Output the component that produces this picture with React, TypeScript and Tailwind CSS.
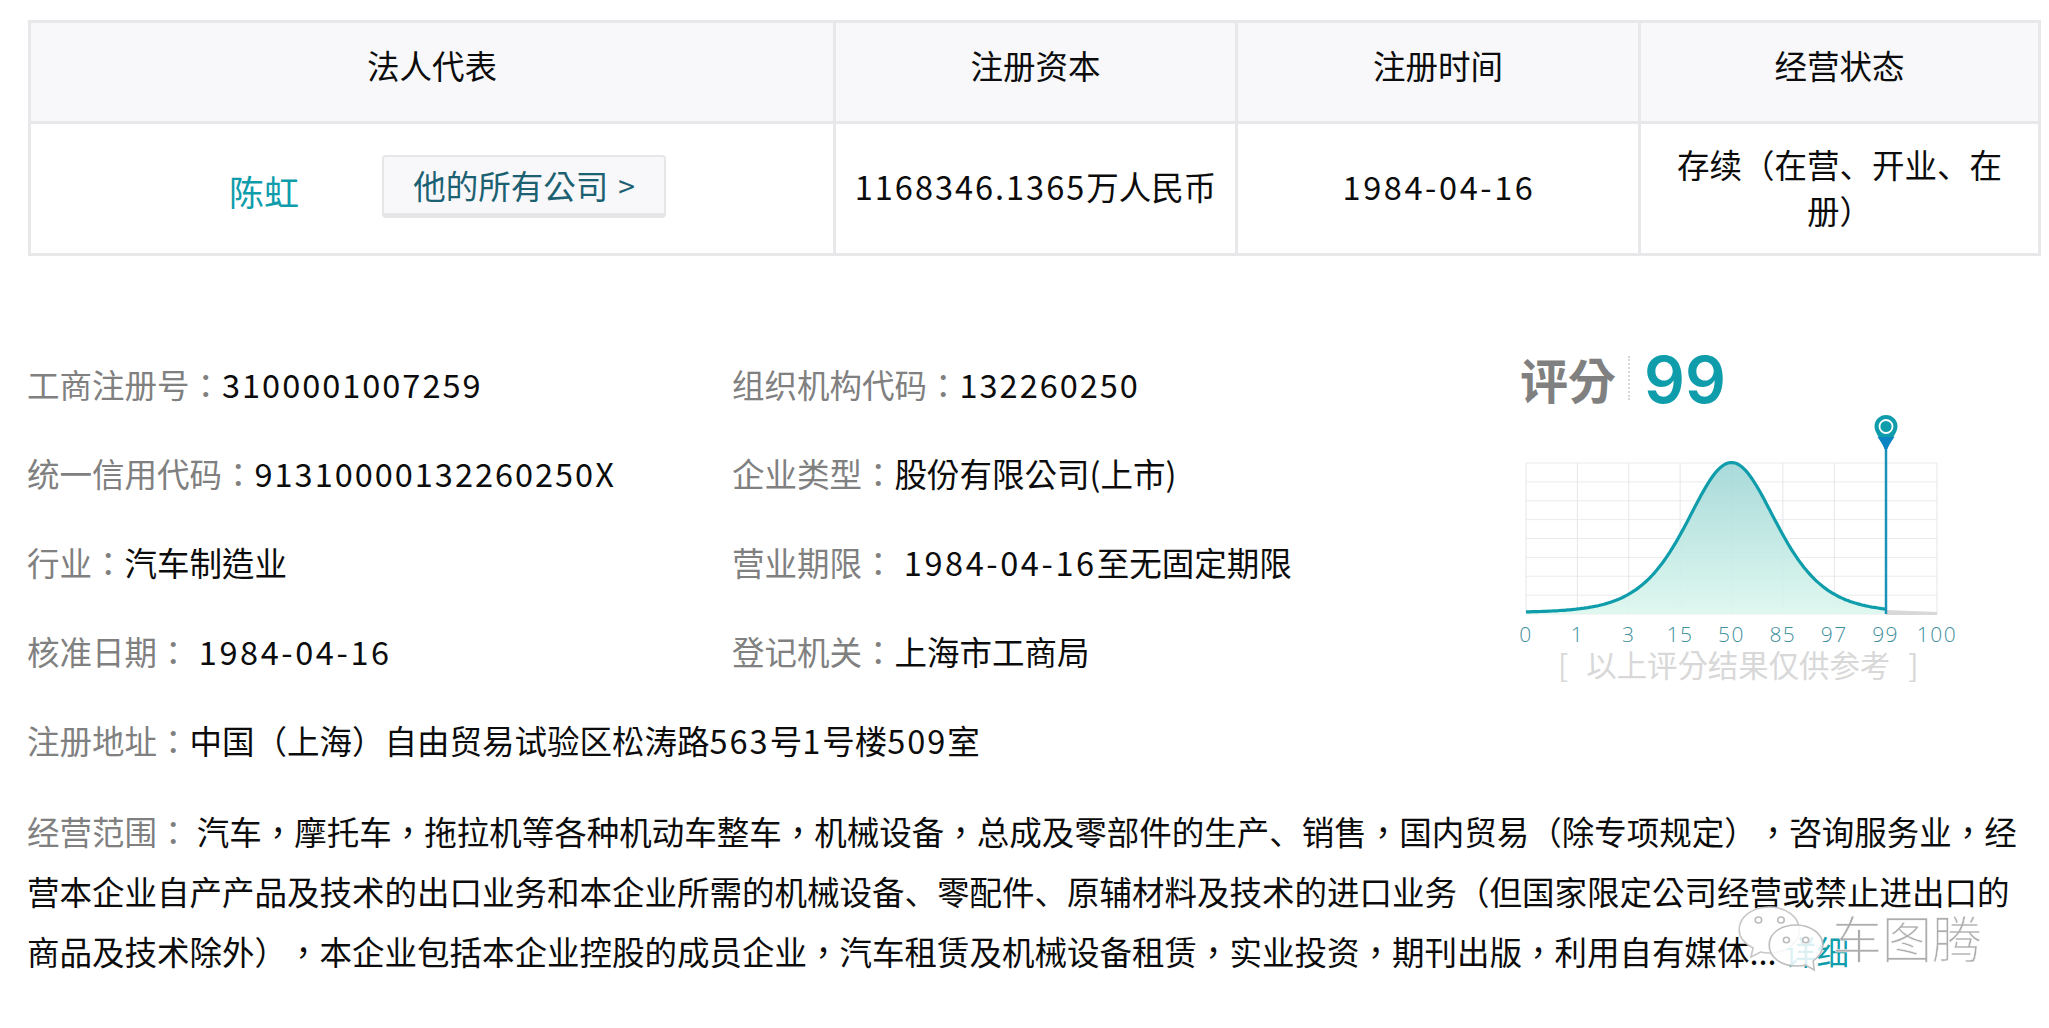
import React from "react";

const teal = "#0f9dab";
const ticks = ["0", "1", "3", "15", "50", "85", "97", "99", "100"];

// chart origin sits at x 10, y 53 of the svg
const CHART_W = 411;
const CHART_H = 151;
const X0 = 10;
const Y0 = 53;

// the bell has heavier tails than a gaussian, sech^2 fits it well
function curveY(x: number) {
  const c = Math.cosh((x - 205.500) / 60);
  return 202.500 - 150 / (c * c);
}

function curvePoints() {
  const pts: string[] = [];
  for (let x = 0; x <= 360; x += 2) {
    pts.push(`${X0 + x},${curveY(x).toFixed(1)}`);
  }
  return pts.join(" ");
}

function Num({ children }: { children: React.ReactNode }) {
  return <span className="tracking-[2px]">{children}</span>;
}

function DateText({ children }: { children: React.ReactNode }) {
  return <span className="ml-[2px] tracking-[2.6px]">{children}</span>;
}

// the enumeration comma sits low-left in the picture, so it keeps the SC form
function Dun() {
  return <span className="font-['Noto_Sans_CJK_SC',sans-serif]">、</span>;
}

function Field({ label, children }: { label: string; children: React.ReactNode }) {
  return (
    <div className="flex h-[89px] items-center whitespace-pre">
      <span className="text-[#808080]">{label}</span>
      <span>{children}</span>
    </div>
  );
}

function ScoreChart() {
  const line = curvePoints();
  return (
    <svg width="460" height="246" viewBox="0 0 460 246" className="-ml-[4px] mt-[5px] block">
      <defs>
        <linearGradient id="area" x1="0" y1="0" x2="0" y2="1">
          <stop offset="0" stopColor="#9fd6d6" />
          <stop offset="1" stopColor="#dcf7ee" />
        </linearGradient>
      </defs>
      {Array.from({ length: 9 }).map((_, i) => (
        <line key={i} x1={X0} x2={X0 + CHART_W} y1={Y0 + (i * CHART_H) / 8} y2={Y0 + (i * CHART_H) / 8} stroke="#ebebee" />
      ))}
      {Array.from({ length: 9 }).map((_, i) => (
        <line key={i} y1={Y0} y2={Y0 + CHART_H} x1={X0 + (i * CHART_W) / 8} x2={X0 + (i * CHART_W) / 8} stroke="#e6e6ea" />
      ))}
      <polygon points={`${X0},${Y0 + CHART_H} ${line} ${X0 + 360},${Y0 + CHART_H}`} fill="url(#area)" opacity="0.9" />
      <polygon points={`${X0 + 360},${Y0 + CHART_H - 4} ${X0 + CHART_W},${Y0 + CHART_H - 2} ${X0 + CHART_W},${Y0 + CHART_H + 1} ${X0 + 360},${Y0 + CHART_H + 1}`} fill="#d8d8d8" />
      <polyline points={line} fill="none" stroke={teal} strokeWidth="3.200" />
      <line x1={X0 + 360} x2={X0 + 360} y1="40" y2={Y0 + CHART_H} stroke="#1a93b8" strokeWidth="2.500" />
      <path d="M370 5a11.5 11.5 0 0 1 11.5 11.5c0 7-7 12-11.5 26c-4.500-14-11.500-19-11.500-26A11.500 11.500 0 0 1 370 5z" fill={teal} />
      <path d="M361.500 27c2.800 4 6 8 8.500 15.500c2.500-7.500 5.700-11.500 8.500-15.500z" fill="#0b84c4" />
      <circle cx="370" cy="16.500" r="6.500" fill={teal} stroke="#fff" strokeWidth="1.800" />
      {ticks.map((t, i) => (
        <text
          key={t}
          x={X0 + (i * CHART_W) / 8}
          y="232"
          textAnchor="middle"
          fontSize="21"
          letterSpacing="1.500"
          fill="#3f8f9c"
          fontFamily="'Open Sans', sans-serif"
          fontWeight="300"
        >
          {t}
        </text>
      ))}
    </svg>
  );
}

function Watermark() {
  return (
    <div className="absolute left-[1737px] top-[904px] flex items-center gap-[7px]">
      <svg width="88" height="70" viewBox="0 0 82 70" preserveAspectRatio="none">
        <path d="M30 3c16 0 28 10 28 23c0 13-12 23-28 23c-3 0-6-.4-8-1l-9 5l2-9C8 40 2 34 2 26C2 13 14 3 30 3z" fill="#fff" fillOpacity="0.85" stroke="#c8c8c8" strokeWidth="1.500" />
        <circle cx="20" cy="16" r="3" fill="#fff" stroke="#bbb" strokeWidth="1.500" />
        <circle cx="41" cy="16" r="3" fill="#fff" stroke="#bbb" strokeWidth="1.500" />
        <path d="M55 21c14 0 25 9 25 20c0 7-4 12-9 16l1 9l-8-5c-3 1-6 1-9 1c-14 0-25-9-25-21s11-20 25-20z" fill="#fff" fillOpacity="0.85" stroke="#bdbdbd" strokeWidth="1.500" />
        <circle cx="46" cy="36" r="2.800" fill="#fff" stroke="#bbb" strokeWidth="1.500" />
        <circle cx="64" cy="36" r="2.800" fill="#fff" stroke="#bbb" strokeWidth="1.500" />
      </svg>
      <span className="-mt-[6px] text-[50px] font-light leading-none text-[#adadad] [-webkit-text-stroke:0.5px_#fff]">车图腾</span>
    </div>
  );
}

export default function App() {
  return (
    <div className="relative h-[1028px] overflow-hidden bg-white pl-[27px] pt-[20px] font-['Noto_Sans_CJK_TC','Noto_Sans',sans-serif] text-[32.5px] leading-[46px] text-[#0c0c0c] [text-spacing-trim:space-all]">
      <table className="ml-px w-[2013px] table-fixed border-collapse border-[3px] border-[#e8e8ea] text-center">
        <colgroup>
          <col className="w-[805px]" />
          <col className="w-[402px]" />
          <col className="w-[403px]" />
          <col />
        </colgroup>
        <thead>
          <tr className="h-[101px] bg-[#f8f8fa]">
            <th className="border-[3px] border-[#e8e8ea] pb-[14px] font-normal">法人代表</th>
            <th className="border-[3px] border-[#e8e8ea] pb-[14px] font-normal">注册资本</th>
            <th className="border-[3px] border-[#e8e8ea] pb-[14px] font-normal">注册时间</th>
            <th className="border-[3px] border-[#e8e8ea] pb-[14px] font-normal">经营状态</th>
          </tr>
        </thead>
        <tbody>
          <tr className="h-[132px]">
            <td className="border-[3px] border-[#e8e8ea] pb-[5px]">
              <div className="flex items-center pl-[198px]">
                <a className="mt-[9px] text-[35px] text-[#0f9dab]">陈虹</a>
                <a className="ml-[83px] flex h-[63px] w-[284px] items-center justify-center rounded-[4px] border-2 border-b-[5px] border-[#e6e6e8] bg-[#f8f8fa] text-[#1c6172]">
                  他的所有公司<span className="ml-[10px] text-[30px]">&gt;</span>
                </a>
              </div>
            </td>
            <td className="whitespace-nowrap border-[3px] border-[#e8e8ea] pb-[6px]">
              <Num>1168346.1365</Num>万人民币
            </td>
            <td className="border-[3px] border-[#e8e8ea] pb-[6px]">
              <DateText>1984-04-16</DateText>
            </td>
            <td className="border-[3px] border-[#e8e8ea] px-[30px] pb-[4px]">存续（在营<Dun />开业<Dun />在册）</td>
          </tr>
        </tbody>
      </table>

      <div className="mt-[83px] flex">
        <div className="grid w-[1493px] grid-cols-[705px_1fr] content-start">
          <Field label="工商注册号："><Num>3100001007259</Num></Field>
          <Field label="组织机构代码："><Num>132260250</Num></Field>
          <Field label="统一信用代码："><Num>91310000132260250X</Num></Field>
          <Field label="企业类型：">股份有限公司(上市)</Field>
          <Field label="行业：">汽车制造业</Field>
          <Field label="营业期限："> <DateText>1984-04-16</DateText>至无固定期限</Field>
          <Field label="核准日期："> <DateText>1984-04-16</DateText></Field>
          <Field label="登记机关：">上海市工商局</Field>
        </div>
        <div className="flex flex-col">
          <div className="flex items-center pt-[11px]">
            <span className="text-[48px] font-bold leading-[50px] text-[#808080]">评分</span>
            <span className="ml-[12px] mr-[14px] h-[44px] border-l-2 border-dotted border-[#d8d8d8]" />
            <span className="pt-[5px] font-['Inter',sans-serif] text-[64px] font-semibold leading-[50px] text-[#0f9dab]">99</span>
          </div>
          <ScoreChart />
          <div className="-mt-[10px] ml-[38px] flex gap-[18px] whitespace-nowrap text-[30.4px] leading-[36px] text-[#d8d8d8]">
            <span>[</span>
            <span>以上评分结果仅供参考</span>
            <span>]</span>
          </div>
        </div>
      </div>

      <div className="flex h-[89px] items-center whitespace-pre">
        <span className="text-[#808080]">注册地址：</span>
        <span>中国（上海）自由贸易试验区松涛路<Num>563</Num>号<Num>1</Num>号楼<Num>509</Num>室</span>
      </div>

      <p className="mt-[17px] whitespace-pre leading-[60px]">
        <span className="text-[#808080]">经营范围：</span> 汽车，摩托车，拖拉机等各种机动车整车，机械设备，总成及零部件的生产<Dun />销售，国内贸易（除专项规定），咨询服务业，经
        <br />
        营本企业自产产品及技术的出口业务和本企业所需的机械设备<Dun />零配件<Dun />原辅材料及技术的进口业务（但国家限定公司经营或禁止进出口的
        <br />
        商品及技术除外），本企业包括本企业控股的成员企业，汽车租赁及机械设备租赁，实业投资，期刊出版，利用自有媒体... <a className="text-[#0f9dab]">详细</a>
      </p>

      <Watermark />
    </div>
  );
}
